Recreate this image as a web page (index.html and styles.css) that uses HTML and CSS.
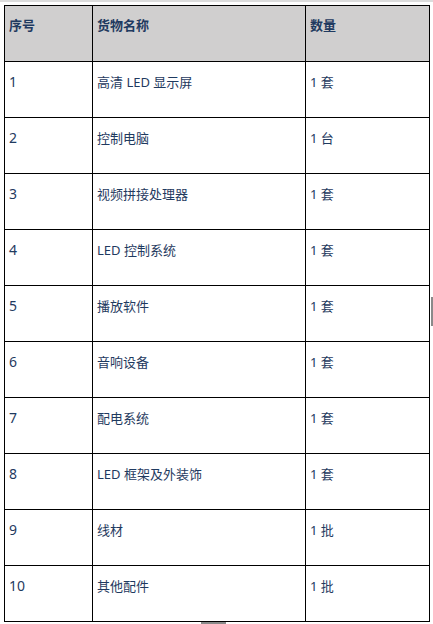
FILE: index.html
```html
<!DOCTYPE html>
<html lang="zh-CN">
<head>
<meta charset="utf-8">
<link rel="stylesheet" href="styles.css">
</head>
<body>
<div class="page">
  <div class="topline"></div>
  <table class="goods">
    <colgroup><col class="c1"><col class="c2"><col class="c3"></colgroup>
    <thead>
      <tr><th>序号</th><th>货物名称</th><th>数量</th></tr>
    </thead>
    <tbody>
      <tr><td>1</td><td>高清 LED 显示屏</td><td>1 套</td></tr>
      <tr><td>2</td><td>控制电脑</td><td>1 台</td></tr>
      <tr><td>3</td><td>视频拼接处理器</td><td>1 套</td></tr>
      <tr><td>4</td><td>LED 控制系统</td><td>1 套</td></tr>
      <tr><td>5</td><td>播放软件</td><td>1 套</td></tr>
      <tr><td>6</td><td>音响设备</td><td>1 套</td></tr>
      <tr><td>7</td><td>配电系统</td><td>1 套</td></tr>
      <tr><td>8</td><td>LED 框架及外装饰</td><td>1 套</td></tr>
      <tr><td>9</td><td>线材</td><td>1 批</td></tr>
      <tr><td>10</td><td>其他配件</td><td>1 批</td></tr>
    </tbody>
  </table>
  <div class="mark-right"></div>
  <div class="mark-bottom"></div>
</div>
</body>
</html>
```
FILE: styles.css
```css
html, body {
  margin: 0;
  padding: 0;
  background: #fff;
}
.page {
  position: relative;
  width: 433px;
  height: 624px;
  overflow: hidden;
  padding-top: 5px;
  padding-left: 4px;
  box-sizing: border-box;
}
.topline {
  position: absolute;
  left: 0;
  top: 0;
  width: 433px;
  height: 2px;
  background: #dcdcdc;
}
.goods {
  border-collapse: collapse;
  width: 425px;
  table-layout: fixed;
  font-family: "Noto Sans", "Noto Sans CJK SC", sans-serif;
  font-size: 13px;
  color: #1f3a60;
}
.c1 { width: 88px; }
.c2 { width: 213px; }
.c3 { width: 124px; }
.goods th, .goods td {
  border: 1.5px solid #000;
  height: 56px;
  box-sizing: border-box;
  vertical-align: top;
  text-align: left;
  padding: 11px 0 0 4px;
  line-height: 18px;
}
.goods td:first-child {
  font-size: 14px;
}
.goods th {
  background: #d0cfcf;
  font-weight: bold;
  padding-top: 10px;
}
.mark-right {
  position: absolute;
  left: 431px;
  top: 297px;
  width: 2px;
  height: 29px;
  background: #8a8a8a;
}
.mark-bottom {
  position: absolute;
  left: 201px;
  top: 622px;
  width: 25px;
  height: 2px;
  background: #8a8a8a;
}
```
